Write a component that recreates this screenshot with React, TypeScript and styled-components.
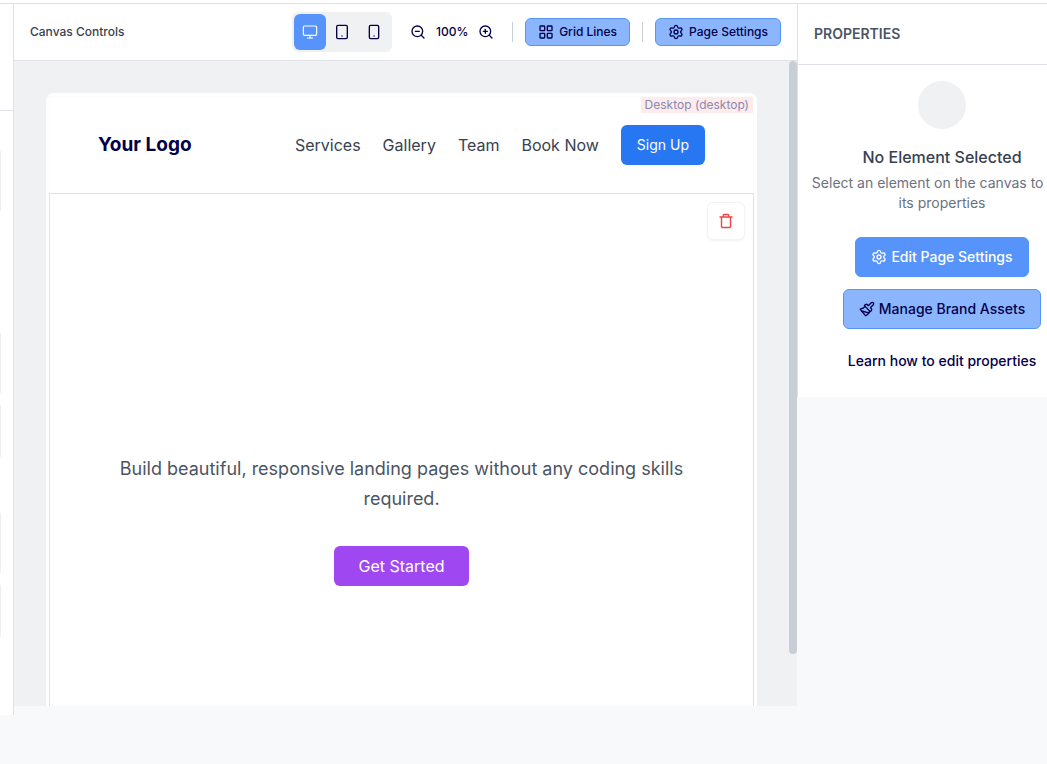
import React from "react";
import styled, { createGlobalStyle, css } from "styled-components";
import { Monitor, Tablet, Smartphone, ZoomIn, ZoomOut, LayoutGrid, Settings, Paintbrush } from "lucide-react";

const navy = "#03004a";
const line = "#dfe1e6";

const Global = createGlobalStyle`
  *, *::before, *::after { box-sizing: border-box; }
  body {
    margin: 0;
    background: #f8f9fb;
    color: #374151;
    font-family: Inter, "Liberation Sans", sans-serif;
    font-size: 14px;
    line-height: 20px;
    overflow: hidden;
  }
  button { font: inherit; cursor: pointer; }
  h1, h2, p { margin: 0; }
`;

const Page = styled.div`
  min-height: 100vh;
  overflow: hidden;
`;

const TopBar = styled.header`
  height: 4px;
  background: #fff;
  border-bottom: 1px solid ${line};
`;

const Workspace = styled.div`
  display: grid;
  grid-template-columns: 14px minmax(0, 1fr) 250px;
  align-items: start;
`;

const Sidebar = styled.aside`
  height: calc(100vh - 53px);
  background: #fff;
  border-right: 1px solid ${line};
`;

const SidebarHead = styled.div`
  height: 107px;
  border-bottom: 1px solid ${line};
`;

const SidebarGroup = styled.div`
  display: grid;
  gap: 12px;
  padding-top: 40px;
  & + & { padding-top: 56px; }
`;

const SidebarCard = styled.div<{ $tall?: boolean }>`
  width: 1px;
  height: ${(p) => (p.$tall ? 60 : 52)}px;
  background: #eeeff1;
`;

const SidebarGap = styled.div`
  height: 82px;
`;

const Editor = styled.main`
  display: flex;
  flex-direction: column;
  height: calc(100vh - 62px);
`;

const Toolbar = styled.div`
  display: flex;
  align-items: center;
  gap: 12px;
  flex: none;
  height: 57px;
  padding: 0 16px;
  background: #fff;
  border-bottom: 1px solid ${line};
  font-size: 12px;
  font-weight: 500;
`;

const ToolbarTitle = styled.h2`
  flex: 1;
  font-size: 12px;
  font-weight: 500;
`;

const DeviceGroup = styled.div`
  display: flex;
  padding: 2px;
  border-radius: 6px;
  background: #f0f1f3;
`;

const IconButton = styled.button<{ $active?: boolean; $wide?: boolean }>`
  display: flex;
  align-items: center;
  justify-content: center;
  width: ${(p) => (p.$wide ? 32 : 28)}px;
  height: 36px;
  padding: 0;
  border: 0;
  border-radius: 6px;
  background: ${(p) => (p.$active ? "#5694fb" : "transparent")};
  color: ${(p) => (p.$active ? "#fff" : navy)};
`;

const ZoomGroup = styled.div`
  display: flex;
  align-items: center;
  color: ${navy};
`;

const ZoomValue = styled.span`
  width: 40px;
  text-align: center;
`;

const Divider = styled.span`
  width: 1px;
  height: 20px;
  background: #cbcfd8;
`;

const filled = css`
  background: #5694fb;
  border-color: #5694fb;
  color: #fff;
`;

const Button = styled.button<{ $primary?: boolean; $small?: boolean }>`
  display: inline-flex;
  align-items: center;
  justify-content: center;
  gap: ${(p) => (p.$small ? 5 : 4)}px;
  height: ${(p) => (p.$small ? 28 : 40)}px;
  padding: 0 ${(p) => (p.$small ? 12 : 15)}px;
  border: 1px solid #5694f5;
  border-radius: 6px;
  background: #8bb6fd;
  color: ${navy};
  font-weight: 500;
  white-space: nowrap;
  ${(p) => p.$primary && filled}
`;

const Stage = styled.div`
  display: flex;
  flex: 1;
  min-height: 0;
  background: #f0f1f3;
`;

const Viewport = styled.div`
  flex: 1;
  min-width: 0;
  padding: 32px 32px 0;
  overflow: hidden;
`;

const Track = styled.div`
  width: 8px;
`;

const Thumb = styled.div`
  height: 92%;
  border-radius: 4px;
  background: #c9cdd6;
`;

const Frame = styled.div`
  position: relative;
  padding: 3px;
  border-radius: 8px;
  background: #fff;
`;

const DeviceBadge = styled.span`
  position: absolute;
  top: 4px;
  right: 4px;
  padding: 0 4px;
  background: #feeced;
  color: #8b87ae;
  font-size: 12px;
  line-height: 16px;
`;

const SiteHeader = styled.header`
  display: flex;
  align-items: center;
  justify-content: space-between;
  padding: 28px 48px;
  border: 1px solid #fcfcfd;
  border-bottom: 0;
`;

const Logo = styled.h1`
  color: ${navy};
  font-size: 19px;
  font-weight: 700;
  line-height: 28px;
`;

const Nav = styled.nav`
  display: flex;
  align-items: center;
  gap: 22px;
  font-size: 16px;
  line-height: 24px;
`;

const NavLink = styled.a`
  color: #374151;
  text-decoration: none;
`;

const SignUp = styled.button`
  height: 40px;
  padding: 0 16px;
  border: 0;
  border-radius: 6px;
  background: #2777f2;
  color: #fff;
  font-size: 14px;
`;

const Hero = styled.section`
  position: relative;
  display: flex;
  flex-direction: column;
  align-items: center;
  gap: 32px;
  padding: 260px 48px;
  border: 1px solid ${line};
  text-align: center;
`;

const DeleteButton = styled.button`
  position: absolute;
  top: 8px;
  right: 8px;
  display: flex;
  align-items: center;
  justify-content: center;
  width: 38px;
  height: 38px;
  border: 1px solid #f3f4f6;
  border-radius: 6px;
  background: #fff;
  box-shadow: 0 1px 2px rgba(0, 0, 0, 0.05);
  color: #ef4444;
`;

const HeroText = styled.p`
  max-width: 600px;
  color: #4b5563;
  font-size: 18px;
  line-height: 30px;
  text-wrap: pretty;
`;

const HeroLine = styled.span`
  display: block;
`;

const HeroButton = styled.button`
  height: 40px;
  padding: 0 24px;
  border: 0;
  border-radius: 6px;
  background: #9f47f1;
  color: #fff;
  font-size: 16px;
`;

const Properties = styled.aside`
  width: 289px;
  background: #fff;
  border-left: 1px solid ${line};
`;

const PropertiesTitle = styled.h2`
  padding: 20px 16px;
  border-bottom: 1px solid ${line};
  color: #4b5563;
  font-size: 14px;
  font-weight: 600;
  line-height: 20px;
`;

const Empty = styled.div`
  display: flex;
  flex-direction: column;
  align-items: center;
  padding: 16px 8px;
  text-align: center;
`;

const Circle = styled.div`
  width: 48px;
  height: 48px;
  margin-bottom: 16px;
  border-radius: 50%;
  background: #f0f1f3;
`;

const EmptyTitle = styled.h2`
  margin-bottom: 4px;
  color: #374151;
  font-size: 16px;
  font-weight: 500;
  line-height: 24px;
`;

const EmptyText = styled.p`
  margin-bottom: 24px;
  color: #6b7280;
`;

const Actions = styled.div`
  display: flex;
  flex-direction: column;
  align-items: center;
  gap: 12px;
`;

const HelpLink = styled.a`
  padding: 10px 0;
  color: ${navy};
  font-weight: 500;
  text-decoration: none;
`;

const TrashIcon = () => (
  <svg width="16" height="16" viewBox="0 0 16 16" fill="none" stroke="currentColor" strokeWidth="1.4" strokeLinejoin="round" strokeLinecap="round">
    <path d="M2 4h12M3.5 4v9.6a.9.9 0 0 0 .9.9h7.2a.9.9 0 0 0 .9-.9V4M5.3 4V2.3a.8.8 0 0 1 .8-.8h3.8a.8.8 0 0 1 .8.8V4" />
  </svg>
);

export default function App() {
  return (
    <Page>
      <Global />
      <TopBar />
      <Workspace>
        <Sidebar>
          <SidebarHead />
          <SidebarGroup>
            <SidebarCard $tall />
          </SidebarGroup>
          <SidebarGap />
          <SidebarGroup>
            <SidebarCard $tall />
            <SidebarCard />
          </SidebarGroup>
          <SidebarGroup>
            <SidebarCard $tall />
            <SidebarCard />
          </SidebarGroup>
        </Sidebar>
        <Editor>
          <Toolbar>
            <ToolbarTitle>Canvas Controls</ToolbarTitle>
            <DeviceGroup>
              <IconButton $wide $active aria-label="Desktop"><Monitor size={16} strokeWidth={1.7} /></IconButton>
              <IconButton $wide aria-label="Tablet"><Tablet size={16} /></IconButton>
              <IconButton $wide aria-label="Mobile"><Smartphone size={16} /></IconButton>
            </DeviceGroup>
            <ZoomGroup>
              <IconButton aria-label="Zoom out"><ZoomOut size={16} /></IconButton>
              <ZoomValue>100%</ZoomValue>
              <IconButton aria-label="Zoom in"><ZoomIn size={16} /></IconButton>
            </ZoomGroup>
            <Divider />
            <Button $small><LayoutGrid size={16} />Grid Lines</Button>
            <Divider />
            <Button $small><Settings size={16} />Page Settings</Button>
          </Toolbar>
          <Stage>
            <Viewport>
              <Frame>
                <SiteHeader>
                  <Logo>Your Logo</Logo>
                  <Nav>
                    <NavLink href="#services">Services</NavLink>
                    <NavLink href="#gallery">Gallery</NavLink>
                    <NavLink href="#team">Team</NavLink>
                    <NavLink href="#book">Book Now</NavLink>
                    <SignUp>Sign Up</SignUp>
                  </Nav>
                </SiteHeader>
                <DeviceBadge>Desktop (desktop)</DeviceBadge>
                <Hero>
                  <DeleteButton aria-label="Delete section"><TrashIcon /></DeleteButton>
                  <HeroText>
                    Build beautiful, responsive landing pages without any coding skills{" "}
                    <HeroLine>required.</HeroLine>
                  </HeroText>
                  <HeroButton>Get Started</HeroButton>
                </Hero>
              </Frame>
            </Viewport>
            <Track><Thumb /></Track>
          </Stage>
        </Editor>
        <Properties>
          <PropertiesTitle>PROPERTIES</PropertiesTitle>
          <Empty>
            <Circle />
            <EmptyTitle>No Element Selected</EmptyTitle>
            <EmptyText>Select an element on the canvas to edit its properties</EmptyText>
            <Actions>
              <Button $primary><Settings size={16} />Edit Page Settings</Button>
              <Button><Paintbrush size={16} />Manage Brand Assets</Button>
              <HelpLink href="#help">Learn how to edit properties</HelpLink>
            </Actions>
          </Empty>
        </Properties>
      </Workspace>
    </Page>
  );
}
